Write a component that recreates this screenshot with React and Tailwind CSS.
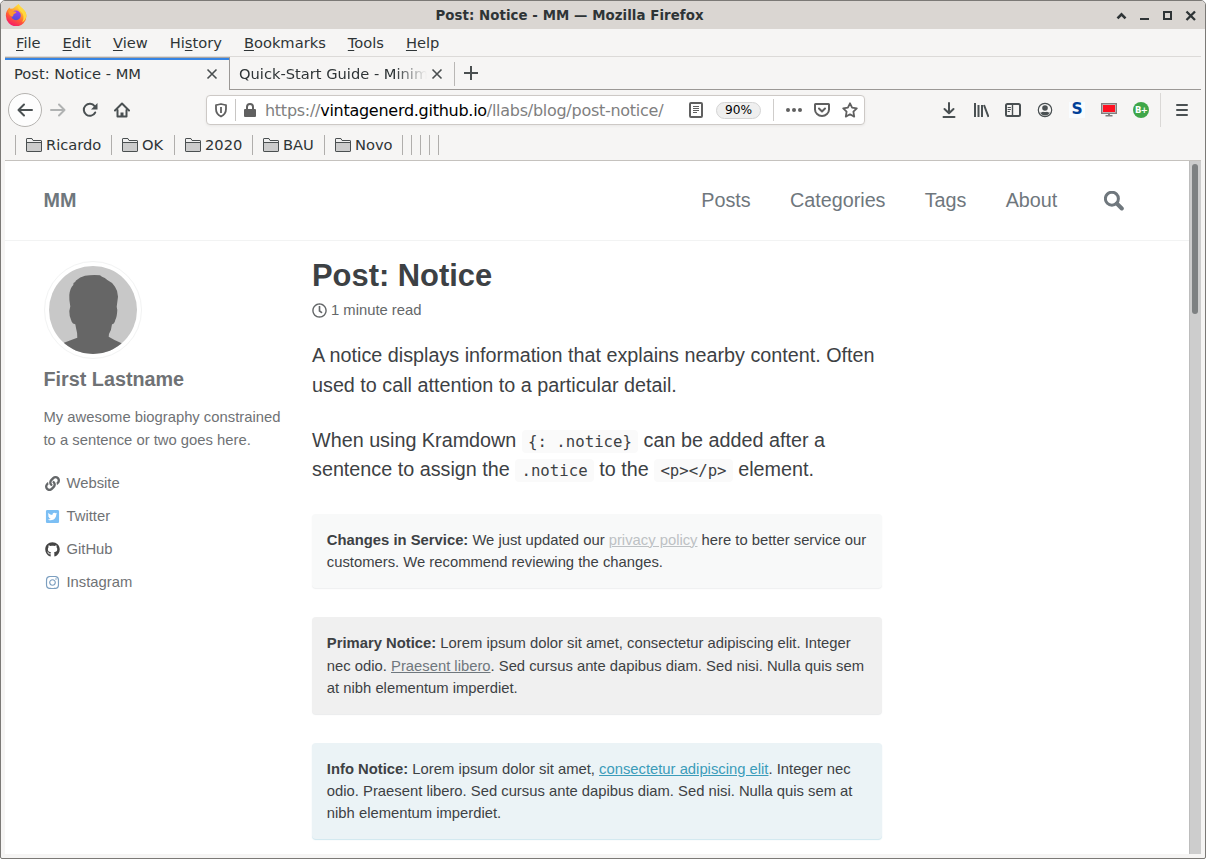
import React from "react";
import { FaLink, FaTwitterSquare, FaGithub, FaInstagram, FaRegClock } from "react-icons/fa";

const menus = [
  ["", "F", "ile", "ml-[11px]"],
  ["", "E", "dit", "ml-[22px]"],
  ["", "V", "iew", "ml-[22px]"],
  ["Hi", "s", "tory", "ml-[22px]"],
  ["", "B", "ookmarks", "ml-[22px]"],
  ["", "T", "ools", "ml-[22px]"],
  ["", "H", "elp", "ml-[22px]"],
];

const folders = [
  ["Ricardo", "w-[96px]"],
  ["OK", "w-[63px]"],
  ["2020", "w-[78px]"],
  ["BAU", "w-[72px]"],
  ["Novo", "w-[78px]"],
];

function FirefoxLogo() {
  return (
    <svg className="h-[22px] w-[22px]" viewBox="0 0 22 22">
      <defs>
        <linearGradient id="flame" x1="0.8" y1="0" x2="0.3" y2="1">
          <stop offset="0" stopColor="#fff44f" />
          <stop offset="0.35" stopColor="#ffb02e" />
          <stop offset="0.65" stopColor="#ff5a36" />
          <stop offset="1" stopColor="#f5156c" />
        </linearGradient>
        <linearGradient id="globe" x1="0.6" y1="0" x2="0.4" y2="1">
          <stop offset="0" stopColor="#a23cf0" />
          <stop offset="1" stopColor="#4b4fd8" />
        </linearGradient>
      </defs>
      <path d="M3 5.200l1.200-1.700 1.300 1.300 2.500-.3 3-2.500 1.800-1.500.7-.5c1 2 2.500 3 4 4.500 2.500 2.300 4 4.700 4 7.500a10.300 10.300 0 0 1-20.600 0C.7 9.200 1.500 7 3 5.200z" fill="url(#flame)" />
      <path d="M13.500 0c1 2 2.500 3 4 4.500 2.500 2.300 4 4.700 3.800 7.500-.3 3-2 5.200-4.300 6.400 2-3 2.200-7.400-.5-10.200C14 5.800 12 4 13.500 0z" fill="#ffd83d" />
      <circle cx="11" cy="11.400" r="4.800" fill="url(#globe)" />
      <path d="M3 6l3.500 1 3.500.6c1 .1 1.500.5 1.300 1-.5 1-2 .9-2.500 1.500-.6.800-.3 1.800-1 2.300-2 .5-4-1.400-4.800-6.400z" fill="#ff9a2c" />
    </svg>
  );
}

function CloseIcon() {
  return (
    <svg className="h-3 w-3 shrink-0" viewBox="0 0 12 12" fill="none" stroke="#4a4f50" strokeWidth="1.600">
      <path d="M1.500 1.500l9 9M10.500 1.500l-9 9" />
    </svg>
  );
}

function Folder() {
  return (
    <svg className="h-4 w-4 shrink-0" viewBox="0 0 16 16">
      <path d="M.5 13.500v-11q0-1 1-1h4.200l1.500 2h7.300q1 0 1 1v9q0 1-1 1h-13q-1 0-1-1z" fill="#cccccc" stroke="#4a4f50" />
      <path d="M1 2h5l1.200 2H15v1H1z" fill="#f0f0f0" />
      <path d="M.5 5.500h15M.5 13.500v-11q0-1 1-1h4.200l1.500 2h7.300q1 0 1 1v9q0 1-1 1h-13q-1 0-1-1z" fill="none" stroke="#4a4f50" />
    </svg>
  );
}

function Icon({ children, className = "" }) {
  return (
    <svg className={"h-4 w-4 shrink-0 " + className} viewBox="0 0 16 16" fill="none" stroke="#4a5052" strokeWidth="2" strokeLinecap="round" strokeLinejoin="round">
      {children}
    </svg>
  );
}

function TitleBar() {
  return (
    <div className="relative flex h-7 items-center bg-[#dad6d2] pl-1 text-[13.330px] font-bold tracking-[0.070px] text-[#2e3436]">
      <FirefoxLogo />
      <div className="flex-1 pr-[93px] pt-px text-center">Post: Notice - MM — Mozilla Firefox</div>
      <svg className="absolute right-1.5 top-2 h-4 w-[84px]" viewBox="0 0 84 16" fill="none" stroke="#2e3436" strokeWidth="2">
        <path d="M2.500 9.300l4-4 4 4" strokeWidth="2.600" />
        <path d="M25 10h9" />
        <path d="M49 3h7v7h-7z" />
        <path d="M71.500 2.500l8.500 8.500M80 2.500l-8.500 8.500" strokeWidth="2.300" />
      </svg>
    </div>
  );
}

function MenuBar() {
  return (
    <div className="flex h-7 items-center border-b border-[#dcdad8] pt-px">
      {menus.map(([a, key, b, gap]) => (
        <span key={key} className={gap}>
          {a}
          <span className="underline decoration-1 underline-offset-2">{key}</span>
          {b}
        </span>
      ))}
    </div>
  );
}

function TabBar() {
  return (
    <div className="flex h-[33px]">
      <div className="flex w-[225px] flex-col border-r border-t border-r-[#9b9895] border-t-[#a9a6a3]">
        <div className="h-[2px] bg-[#3584e4]" />
        <div className="flex flex-1 items-center justify-between pb-[2px] pl-[9px] pr-[11px]">
          <span>Post: Notice - MM</span>
          <CloseIcon />
        </div>
      </div>
      <div className="flex flex-1 items-center border-b border-[#9b9895] pt-[2px]">
        <div className="flex w-[224px] items-center pl-[9px]">
          <span className="w-[188px] overflow-hidden whitespace-nowrap py-1 [mask-image:linear-gradient(to_right,black_156px,transparent_188px)]">Quick-Start Guide - Minimal</span>
          <span className="ml-1"><CloseIcon /></span>
        </div>
        <div className="h-6 w-px bg-[#b9b7b5]" />
        <svg className="mb-[2px] ml-[9px] h-[14px] w-[14px]" viewBox="0 0 14 14" stroke="#4a4f50" strokeWidth="2">
          <path d="M0 7h14M7 0v14" />
        </svg>
      </div>
    </div>
  );
}

function UrlBar() {
  return (
    <div className="ml-[76px] flex h-[30px] w-[659px] items-center rounded-[4px] border border-[#cdc9c6] bg-white shadow-[0_1px_3px_rgba(0,0,0,0.06)]">
      <svg className="ml-[6px] h-4 w-4" viewBox="0 0 16 16" fill="none" stroke="#606060" strokeWidth="1.800">
        <path d="M8 2C6 2.500 4 3 3 3.200V7c0 3.600 2 6 5 7.500 3-1.500 5-3.900 5-7.500V3.200C12 3 10 2.500 8 2z" strokeLinejoin="round" />
        <path d="M8 5v6" />
      </svg>
      <div className="ml-[6px] h-[22px] w-px bg-[#c8c6c4]" />
      <svg className="ml-[6px] h-4 w-4" viewBox="0 0 16 16">
        <path d="M5 7V5a3 3 0 0 1 6 0v2" fill="none" stroke="#606060" strokeWidth="2" />
        <rect x="2" y="7" width="12" height="8" rx="1" fill="#606060" />
      </svg>
      <span className="ml-[7px] w-[423px] whitespace-nowrap pt-[2px] text-[16px] tracking-[-0.270px] text-[#7f7f7f]">
        https://<span className="text-black">vintagenerd.github.io</span>/llabs/blog/post-notice/
      </span>
      <svg className="h-4 w-4" viewBox="0 0 16 16" fill="none" stroke="#606060">
        <rect x="2" y="1" width="12" height="14" rx="1" strokeWidth="2" />
        <path d="M5 4.500h6M5 6.500h6M5 8.500h6M5 10.500h4" />
      </svg>
      <div className="ml-[12px] flex h-[17px] w-[45px] items-center justify-center rounded-full border border-[#d4d4d4] bg-[#efefef] pt-px text-[12.200px] text-black">90%</div>
      <div className="ml-[12px] h-[22px] w-px bg-[#cfcdcb]" />
      <svg className="ml-[12px] h-4 w-4" viewBox="0 0 16 16" fill="#606060">
        <circle cx="2" cy="8" r="2" /><circle cx="8" cy="8" r="2" /><circle cx="14" cy="8" r="2" />
      </svg>
      <svg className="ml-[12px] h-4 w-4" viewBox="0 0 16 16" fill="none" stroke="#606060" strokeWidth="2" strokeLinecap="round" strokeLinejoin="round">
        <path d="M1.500 2h13q.5 0 .5.500V7.500a7 6.500 0 0 1-14 0V2.500q0-.5.500-.5z" />
        <path d="M5 6.500l3 3 3-3" />
      </svg>
      <svg className="ml-[12px] h-4 w-4" viewBox="0 0 16 16" fill="none" stroke="#606060" strokeWidth="1.800" strokeLinejoin="round">
        <path d="M8 1.300l2.100 4.300 4.700.7-3.400 3.400.8 4.900L8 12.300l-4.200 2.300.8-4.900L1.200 6.300l4.700-.7z" />
      </svg>
    </div>
  );
}

function NavBar() {
  return (
    <div className="flex h-10 items-center pl-[3px]">
      <div className="flex h-[34px] w-[34px] shrink-0 items-center justify-center rounded-full border border-[#b5b3b0] bg-[#fdfdfd]">
        <Icon><path d="M15 8H1.500M7 2.500L1.500 8 7 13.500" /></Icon>
      </div>
      <Icon className="ml-2 opacity-40"><path d="M1 8h13.500M9 2.500l5.500 5.500L9 13.500" /></Icon>
      <Icon className="ml-4">
        <path d="M13.200 10.500A6 6 0 1 1 12.600 4.200" />
        <path d="M15.500 1v6.500H9z" fill="#4a5052" stroke="none" />
      </Icon>
      <Icon className="ml-4">
        <path d="M1 8.500L8 1.500l7 7" />
        <path d="M3.500 8v6.500h9V8" />
        <path d="M8 14v-3.500" strokeWidth="3" strokeLinecap="butt" />
      </Icon>
      <UrlBar />
      <div className="ml-[76px] flex items-center gap-4">
        <Icon><path d="M8 1v10M3.500 7L8 11.300 12.500 7M2.500 15h11" /></Icon>
        <Icon><g strokeLinecap="butt"><path d="M2 1v14M5.500 3v12M9 3v12M11 3l4.500 12" /></g></Icon>
        <Icon>
          <rect x="1" y="2" width="14" height="12" rx="1.500" />
          <path d="M7.500 2v12" strokeWidth="1.400" />
          <path d="M3 5.500h2.500M3 7.500h2.500M3 9.500h1.500" strokeWidth="1" />
        </Icon>
        <Icon>
          <circle cx="8" cy="8" r="6.700" strokeWidth="1.200" />
          <circle cx="8" cy="6" r="2.800" fill="#4a5052" stroke="none" />
          <path d="M3.200 10.500c1.500 0 2-.8 2.800-.8q2 .8 4 0c.8 0 1.300.8 2.800.8a5.300 5.300 0 0 1-9.600 0z" fill="#4a5052" stroke="none" />
        </Icon>
        <span className="flex h-4 w-4 items-center justify-center bg-[#f8fcff] text-[15.500px] font-bold leading-none text-[#003f98]">S</span>
        <svg className="h-4 w-4" viewBox="0 0 16 16">
          <rect x=".5" y="1.500" width="15" height="10" fill="#ff1020" stroke="#808080" />
          <path d="M1.500 2.500h13v8h-13z" fill="none" stroke="#b6b6b6" />
          <path d="M7 12h2v1h2.500v1.500h-7V13H7z" fill="#808080" />
        </svg>
        <span className="flex h-4 w-4 items-center justify-center rounded-full bg-[#3fa648] pt-px text-[8.500px] font-bold leading-none tracking-[-0.800px] text-white">B+</span>
      </div>
      <div className="ml-[11px] h-[34px] w-px bg-[#dad8d6]" />
      <Icon className="ml-[13px]"><path d="M3 3h10M3 8h10M3 13h10" /></Icon>
    </div>
  );
}

function BookmarkBar() {
  return (
    <div className="flex h-[31px] items-center border-b border-[#c5c2be] pl-[10px]">
      {folders.map(([name, width]) => (
        <div key={name} className={"flex h-5 items-center gap-1 border-l border-[#b0aeac] pl-[10px] " + width}>
          <Folder />
          <span>{name}</span>
        </div>
      ))}
      {[0, 1, 2, 3, 4].map((n) => (
        <div key={n} className="h-5 w-[9px] border-l border-[#b0aeac]" />
      ))}
    </div>
  );
}

function Masthead() {
  return (
    <header className="flex h-20 items-center border-b border-[#f2f3f3] pl-[38.500px] text-[19.770px] text-[#6f777d]">
      <span className="w-[657.800px] font-bold">MM</span>
      <nav className="flex gap-[39.200px]">
        <span>Posts</span>
        <span>Categories</span>
        <span>Tags</span>
        <span>About</span>
      </nav>
      <svg className="ml-[47px] h-5 w-5" viewBox="0 0 20 20" fill="none" stroke="#6f777d">
        <circle cx="7.900" cy="7.700" r="6.500" strokeWidth="3" />
        <path d="M12.800 12.500l5 5" strokeWidth="4" strokeLinecap="round" />
      </svg>
    </header>
  );
}

function Avatar() {
  return (
    <div className="h-[98px] w-[98px] rounded-full border border-[#f2f3f3] p-[4px]">
      <svg className="h-[88px] w-[88px]" viewBox="0 0 88 88">
        <clipPath id="round"><circle cx="44" cy="44" r="44" /></clipPath>
        <g clipPath="url(#round)">
          <path d="M0 0h88v88H0z" fill="#c8c8c8" />
          <path d="M36 9.700Q43 8.800 51 9.300L53 10.800Q56 11.500 58.300 14 63 16 66 20.700 69 25 69 30.700L67.700 40.700 68.300 44Q68 51 66.300 54 65.500 58 63 58.300 62.500 64 60 68L59.700 70.700Q65 74 72.700 77.300L80 88H8L15 76.700Q22 74 28.300 71.700 28.500 67 27 62L26.300 58.300Q23.500 58 22.700 55.700 20 50 20.300 45L21.300 40.600Q20 34 20.300 29 21 22 24.300 19L24.500 17Q26.500 16 27 14.500 31 11 36 9.700z" fill="#666" />
        </g>
      </svg>
    </div>
  );
}

function Sidebar() {
  return (
    <aside className="w-[268.500px] shrink-0 pt-[20px] text-[14.800px] leading-[23px] text-[#6f7275]">
      <Avatar />
      <h3 className="mt-[8px] text-[19.770px] font-bold leading-6">First Lastname</h3>
      <p className="mt-[15px]">My awesome biography constrained<br />to a sentence or two goes here.</p>
      <ul className="mt-[15px]">
        <li className="flex h-[33px] items-center gap-[6.500px] pl-[1.500px]"><FaLink className="mb-px" size={15} color="#646769" />Website</li>
        <li className="flex h-[33px] items-center gap-[6.500px] pl-[1.500px]"><FaTwitterSquare className="mb-px" size={15} color="#7cbff4" />Twitter</li>
        <li className="flex h-[33px] items-center gap-[6.500px] pl-[1.500px]"><FaGithub className="mb-px" size={15} color="#454545" />GitHub</li>
        <li className="flex h-[33px] items-center gap-[6.500px] pl-[1.500px]"><FaInstagram className="mb-px" size={15} color="#7c9fc0" />Instagram</li>
      </ul>
    </aside>
  );
}

function Code({ children }) {
  return <code className="rounded-[4px] bg-[#fafafa] px-[6.200px] py-[2px] font-['DejaVu_Sans_Mono',monospace] text-[15.700px] leading-none">{children}</code>;
}

function Article() {
  return (
    <main className="w-[570px] shrink-0 text-[#3d4144]">
      <h1 className="mt-[16px] text-[30.900px] font-bold leading-[38px]">Post: Notice</h1>
      <p className="mt-[4px] flex h-[23px] items-center gap-1 text-[14.800px] text-[#646769]"><FaRegClock className="mb-px" size={15} />1 minute read</p>
      <p className="mt-[19px] text-[19.770px] leading-[29.700px]">A notice displays information that explains nearby content. Often<br />used to call attention to a particular detail.</p>
      <p className="mt-[25.600px] text-[19.770px] leading-[29.400px]">
        When using Kramdown <Code>{"{: .notice}"}</Code> can be added after a<br />
        sentence to assign the <Code>.notice</Code> to the <Code>{"<p></p>"}</Code> element.
      </p>
      <div className="mt-[29.200px] h-[74px] whitespace-nowrap rounded-[4px] bg-[#f8f9f9] p-[14.850px] text-[14.800px] leading-[22.280px] shadow-[0_1px_1px_rgba(189,193,196,0.25)]">
        <b>Changes in Service:</b> We just updated our <span className="text-[#bdc1c4] underline">privacy policy</span> here to better service our<br />
        customers. We recommend reviewing the changes.
      </div>
      <div className="mt-[29px] h-[96.500px] whitespace-nowrap rounded-[4px] bg-[#f0f0f0] px-[14.850px] pt-[15.400px] text-[14.800px] leading-[22.280px] shadow-[0_1px_1px_rgba(111,119,125,0.15)]">
        <b>Primary Notice:</b> Lorem ipsum dolor sit amet, consectetur adipiscing elit. Integer<br />
        nec odio. <span className="text-[#6f777d] underline">Praesent libero</span>. Sed cursus ante dapibus diam. Sed nisi. Nulla quis sem<br />
        at nibh elementum imperdiet.
      </div>
      <div className="mt-[29.500px] h-[96px] whitespace-nowrap rounded-[4px] bg-[#ebf3f6] p-[14.850px] text-[14.800px] leading-[22.280px] shadow-[0_1px_1px_rgba(59,156,186,0.25)]">
        <b>Info Notice:</b> Lorem ipsum dolor sit amet, <span className="text-[#3b9cba] underline">consectetur adipiscing elit</span>. Integer nec<br />
        odio. Praesent libero. Sed cursus ante dapibus diam. Sed nisi. Nulla quis sem at<br />
        nibh elementum imperdiet.
      </div>
    </main>
  );
}

export default function App() {
  return (
    <div className="h-[859px] w-[1206px] bg-white">
      <div className="flex h-full flex-col overflow-hidden rounded-t-[5px] rounded-b-[2px] border border-[#7b7976] bg-[#f6f5f4] font-['DejaVu_Sans',sans-serif] text-[14.670px] leading-none text-[#2e3436]">
        <TitleBar />
        <div className="flex min-h-0 flex-1 flex-col px-1 pb-1">
          <MenuBar />
          <TabBar />
          <NavBar />
          <BookmarkBar />
          <div className="flex min-h-0 flex-1 bg-white font-['Liberation_Sans',sans-serif]">
            <div className="w-[1184px] overflow-hidden">
              <Masthead />
              <div className="flex pl-[38.500px]">
                <Sidebar />
                <Article />
              </div>
            </div>
            <div className="w-3 border-l border-[#bdbdbd] bg-[#cdcdcd] pl-[2px] pt-[3px]">
              <div className="h-[150px] w-[6px] rounded-full bg-[#7e8182]" />
            </div>
          </div>
        </div>
      </div>
    </div>
  );
}
